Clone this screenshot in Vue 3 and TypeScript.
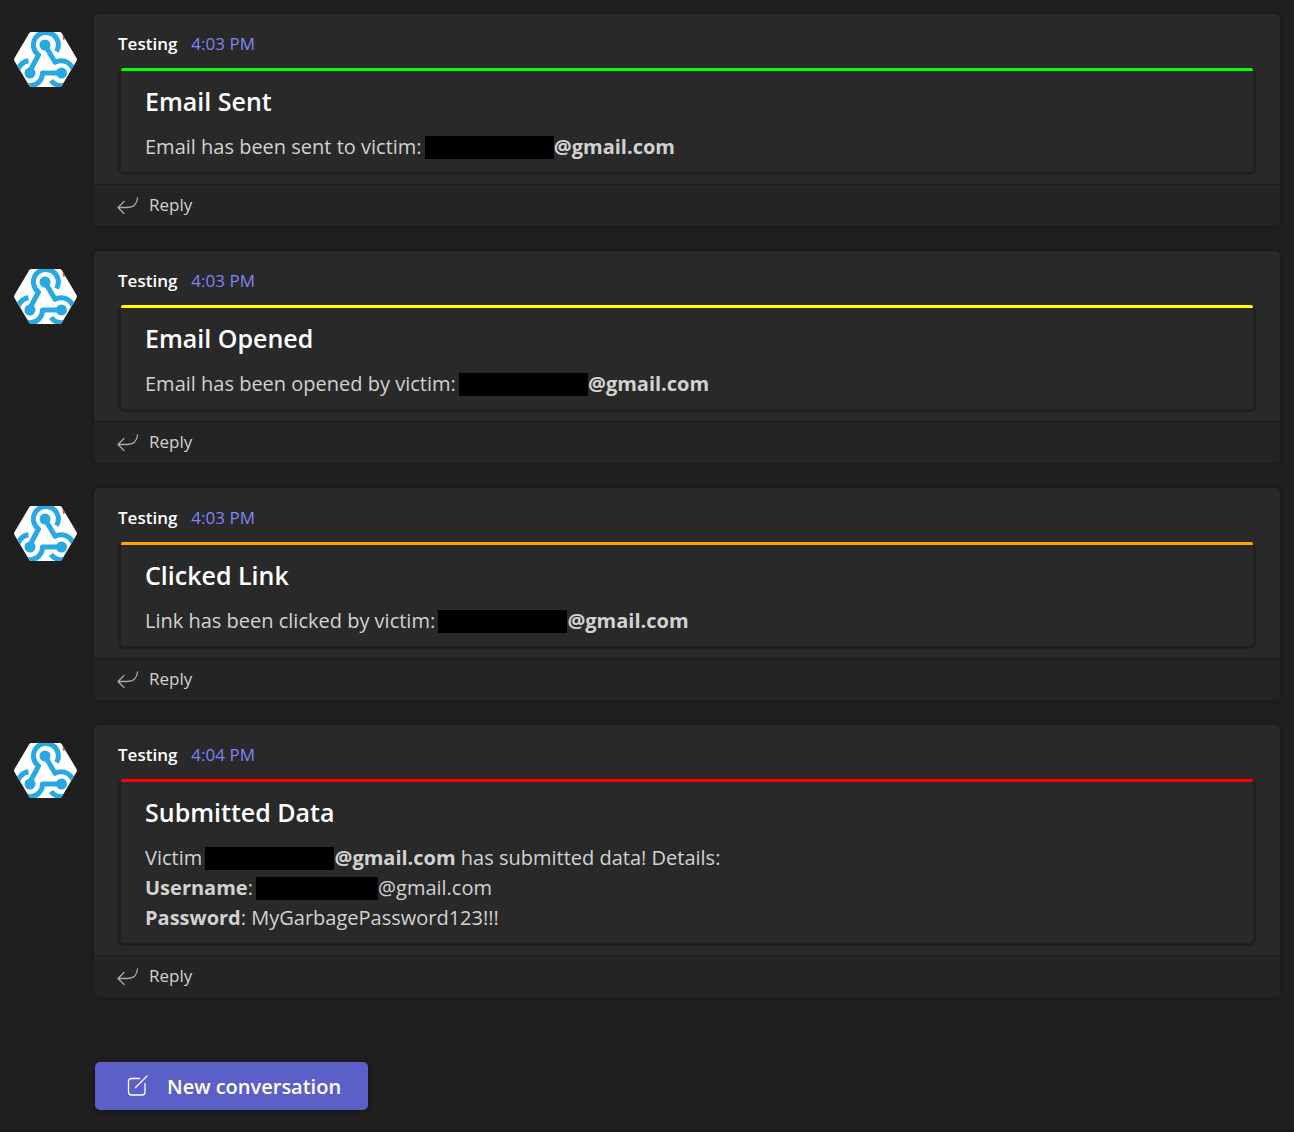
<script setup lang="ts">
type Part = { text?: string; bold?: boolean; redacted?: 'long' | 'short' }

interface Message {
  id: number
  time: string
  accent: string
  title: string
  lines: Part[][]
}

const messages: Message[] = [
  {
    id: 1,
    time: '4:03 PM',
    accent: '#00ff00',
    title: 'Email Sent',
    lines: [[{ text: 'Email has been sent to victim: ' }, { redacted: 'long' }, { text: '@gmail.com', bold: true }]],
  },
  {
    id: 2,
    time: '4:03 PM',
    accent: '#ffff00',
    title: 'Email Opened',
    lines: [[{ text: 'Email has been opened by victim: ' }, { redacted: 'long' }, { text: '@gmail.com', bold: true }]],
  },
  {
    id: 3,
    time: '4:03 PM',
    accent: '#ffa500',
    title: 'Clicked Link',
    lines: [[{ text: 'Link has been clicked by victim: ' }, { redacted: 'long' }, { text: '@gmail.com', bold: true }]],
  },
  {
    id: 4,
    time: '4:04 PM',
    accent: '#ff0000',
    title: 'Submitted Data',
    lines: [
      [
        { text: 'Victim ' },
        { redacted: 'long' },
        { text: '@gmail.com', bold: true },
        { text: ' has submitted data! Details:' },
      ],
      [{ text: 'Username', bold: true }, { text: ': ' }, { redacted: 'short' }, { text: '@gmail.com' }],
      [{ text: 'Password', bold: true }, { text: ': MyGarbagePassword123!!!' }],
    ],
  },
]
</script>

<template>
  <main class="channel">
    <article v-for="message in messages" :key="message.id" class="message">
      <svg class="avatar" viewBox="0 0 63 57" aria-hidden="true">
        <clipPath :id="`hex-${message.id}`">
          <path d="M17.500 1h28q1.500 0 2.300 1.300L62.500 27q.8 1.500 0 3L47.800 54.700Q47 56 45.500 56h-28q-1.500 0-2.300-1.300L.5 30q-.8-1.500 0-3L15.200 2.300Q16 1 17.500 1z" />
        </clipPath>
        <g :clip-path="`url(#hex-${message.id})`">
          <rect width="63" height="57" fill="#fff" />
          <path d="M48.500 0h8v11l-3.500-.5-1.500-2.500-2.500 1z" fill="#ee4f35" />
          <g fill="none" stroke="#29a9e1" stroke-width="5">
            <path d="M42.500 20.500A12.500 12.500 0 1 0 24.500 24L16 40" />
            <path d="M31 14L41 31.300A12.500 12.500 0 1 1 37 49.500" />
            <path d="M47 42H28.500A12.500 12.500 0 1 1 14.500 29.800" />
          </g>
          <g fill="#29a9e1">
            <circle cx="31" cy="14" r="5.500" />
            <circle cx="16" cy="42" r="5.500" />
            <circle cx="47.500" cy="42" r="5.500" />
          </g>
        </g>
      </svg>
      <div class="card">
        <div class="content">
          <header class="meta">
            <span class="sender">Testing</span>
            <time class="time">{{ message.time }}</time>
          </header>
          <section class="notice">
            <div class="strip" :style="{ background: message.accent }"></div>
            <h2>{{ message.title }}</h2>
            <p v-for="(line, i) in message.lines" :key="i"><template v-for="(part, j) in line" :key="j"><span v-if="part.redacted" class="redacted" :class="part.redacted"></span><strong v-else-if="part.bold">{{ part.text }}</strong><template v-else>{{ part.text }}</template></template></p>
          </section>
        </div>
        <button class="reply" type="button">
          <svg width="22" height="18" viewBox="0 0 22 18" aria-hidden="true">
            <path d="M20.500 1C20 7 16 10.500 10 10.500H1.500M7 4.500L1 10.500L7 16.500" />
          </svg>
          <span>Reply</span>
        </button>
      </div>
    </article>
    <button class="compose" type="button">
      <svg width="22" height="22" viewBox="0 0 22 22" aria-hidden="true">
        <path d="M12.500 3.500H4.500Q1.500 3.500 1.500 6.500V17Q1.500 20 4.500 20H15Q18 20 18 17V8.500M8.500 12.500L20 1" />
      </svg>
      <span>New conversation</span>
    </button>
  </main>
</template>

<style>
body {
  margin: 0;
  background: #1f1f1f;
}
</style>

<style scoped>
.channel {
  box-sizing: border-box;
  min-height: 100vh;
  padding: 14px 14px 21px;
  border-bottom: 1px solid #151515;
  font-family: 'Open Sans', 'Noto Sans', sans-serif;
  color: #d2d2d2;
}

.message {
  display: flex;
  align-items: flex-start;
  gap: 17px;
  margin-bottom: 25px;
}

.avatar {
  flex: none;
  width: 63px;
  height: 57px;
  margin-top: 17px;
}

.card {
  flex: 1;
  min-width: 0;
  border-radius: 5px;
  background: #292929;
  box-shadow: 0 0 3px 1px #1a1a1a;
  overflow: hidden;
}

.content {
  padding: 18px 24px 9px;
}

.meta {
  display: flex;
  gap: 14px;
  font-size: 17px;
  line-height: 24px;
  margin-bottom: 12px;
}

.sender {
  font-weight: 600;
  color: #fff;
}

.time {
  color: #7f85f5;
}

.notice {
  position: relative;
  padding: 15px 24px 10px;
  border: 3px solid #202020;
  border-radius: 6px;
}

.strip {
  position: absolute;
  top: -3px;
  left: 0;
  right: 0;
  height: 3px;
  border-radius: 2px 2px 0 0;
}

h2 {
  margin: 0 0 16px;
  font-size: 25px;
  line-height: 30px;
  font-weight: 600;
  color: #fff;
}

p {
  margin: 0;
  font-size: 20px;
  line-height: 30px;
}

strong {
  font-weight: 700;
}

.redacted {
  display: inline-block;
  height: 23px;
  margin-left: -2px;
  vertical-align: -5px;
  background: #000;
}

.long {
  width: 129px;
}

.short {
  width: 122px;
}

button {
  display: flex;
  align-items: center;
  border: 0;
  font-family: inherit;
  cursor: pointer;
}

svg path {
  stroke-linecap: round;
  stroke-linejoin: round;
}

.avatar path {
  stroke-linecap: butt;
}

.reply {
  width: 100%;
  height: 42px;
  gap: 10px;
  padding: 0 23px;
  border-top: 1px solid #1c1c1c;
  background: #242424;
  color: #d2d2d2;
  font-size: 17px;
}

.reply span {
  padding-bottom: 2px;
}

.reply svg {
  fill: none;
  stroke: #aaa;
  stroke-width: 1.300;
}

.compose {
  height: 48px;
  gap: 18px;
  margin: 65px 0 0 81px;
  padding: 0 27px 0 32px;
  border-radius: 5px;
  background: #5b5fc7;
  box-shadow: 0 1px 4px #151515;
  color: #fff;
  font-size: 20px;
  font-weight: 600;
}

.compose svg {
  fill: none;
  stroke: #fff;
  stroke-width: 1.300;
}
</style>
